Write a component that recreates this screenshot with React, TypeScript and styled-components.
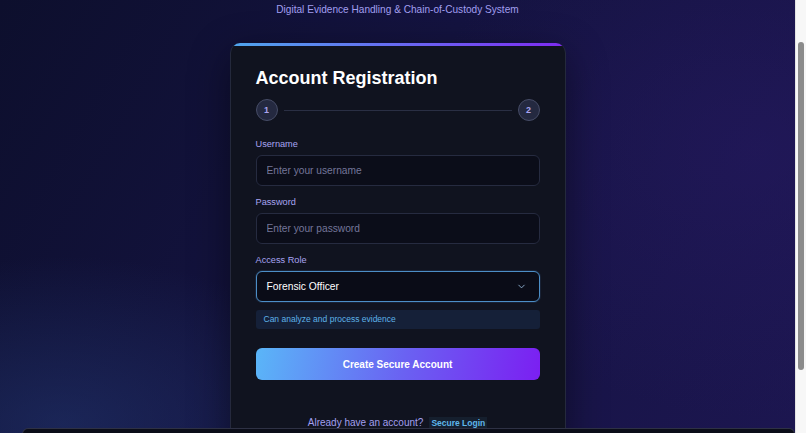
import styled, { createGlobalStyle } from "styled-components";
import { ChevronDown } from "lucide-react";

const GlobalStyle = createGlobalStyle`
    html, body {
        margin: 0;
        padding: 0;
        height: 100%;
        overflow: hidden;
    }
    body {
        background: #13123a;
        font-family: "Liberation Sans", Arial, Helvetica, sans-serif;
    }
    #root {
        height: 100%;
    }
`;

export default function App() {
    return (
        <>
            <GlobalStyle />
            <Viewport>
                <Main>
                    <Subtitle>{"Digital Evidence Handling & Chain-of-Custody System"}</Subtitle>
                    <Card>
                        <Title>{"Account Registration"}</Title>
                        <Steps>
                            <StepDot>{"1"}</StepDot>
                            <StepLine />
                            <StepDot>{"2"}</StepDot>
                        </Steps>

                        <Label $first>{"Username"}</Label>
                        <Input placeholder="Enter your username" />

                        <Label>{"Password"}</Label>
                        <Input type="password" placeholder="Enter your password" />

                        <Label>{"Access Role"}</Label>
                        <Select>
                            <span>{"Forensic Officer"}</span>
                            <ChevronDown size={11} strokeWidth={2} />
                        </Select>
                        <Hint>{"Can analyze and process evidence"}</Hint>

                        <SubmitButton>{"Create Secure Account"}</SubmitButton>

                        <Footer>
                            {"Already have an account?"}
                            <LoginLink>{"Secure Login"}</LoginLink>
                        </Footer>
                    </Card>
                </Main>
                <ScrollRail>
                    <ScrollThumb />
                </ScrollRail>
            </Viewport>
            <BottomPanel />
        </>
    );
}

const Viewport = styled.div`
    height: 100%;
    display: flex;
`;

const Main = styled.div`
    flex: 1;
    overflow: hidden;
    padding-top: 3px;
    display: flex;
    flex-direction: column;
    align-items: center;
    background:
        radial-gradient(ellipse 420px 240px at 8% 98%, rgba(34, 54, 112, 0.55), transparent 70%),
        radial-gradient(ellipse 480px 380px at 95% 35%, rgba(40, 26, 102, 0.45), transparent 70%),
        linear-gradient(120deg, #0d0f2d 0%, #141340 45%, #1c1650 100%);
`;

const ScrollRail = styled.div`
    width: 11px;
    flex-shrink: 0;
    box-sizing: border-box;
    padding: 42px 2px 0 2px;
    background: #f7f7f7;
    border-left: 1px solid #e3e3e3;
`;

const ScrollThumb = styled.div`
    height: 328px;
    border-radius: 4px;
    background: #8b8b8b;
`;

const Subtitle = styled.div`
    font-size: 10.1px;
    line-height: 14px;
    color: #a29ff0;
`;

const Card = styled.div`
    position: relative;
    flex-shrink: 0;
    margin-top: 26px;
    width: 336px;
    box-sizing: border-box;
    padding: 24px 25px 24px;
    display: flex;
    flex-direction: column;
    background: #10131f;
    border: 1px solid rgba(120, 130, 180, 0.2);
    border-top: none;
    border-radius: 10px;
    box-shadow: 0 12px 40px rgba(0, 0, 0, 0.45);
    overflow: hidden;

    &::before {
        content: "";
        position: absolute;
        top: 0;
        left: 0;
        right: 0;
        height: 3px;
        background: linear-gradient(90deg, #4fa6ee, #6a64f2 55%, #7e2bf2);
    }
`;

const Title = styled.h1`
    margin: 0;
    font-size: 18px;
    line-height: 22px;
    font-weight: bold;
    color: #ffffff;
`;

const Steps = styled.div`
    margin-top: 10px;
    display: flex;
    align-items: center;
`;

const StepDot = styled.div`
    width: 22px;
    height: 22px;
    box-sizing: border-box;
    border-radius: 50%;
    background: #242940;
    border: 1.5px solid #464c66;
    color: #aaa4f0;
    font-size: 9px;
    font-weight: bold;
    display: flex;
    align-items: center;
    justify-content: center;
`;

const StepLine = styled.div`
    flex: 1;
    height: 1px;
    margin: 0 6px;
    background: #2a2f44;
`;

const Label = styled.label<{ $first?: boolean }>`
    margin-top: ${({ $first }) => ($first ? "17px" : "10px")};
    font-size: 9.2px;
    line-height: 12px;
    color: #a8a4f2;
`;

const Input = styled.input`
    margin-top: 5px;
    height: 31px;
    box-sizing: border-box;
    padding: 0 10px;
    background: #0b0d19;
    border: 1px solid #262b40;
    border-radius: 6px;
    color: #ffffff;
    font-family: inherit;
    font-size: 10.2px;
    outline: none;

    &::placeholder {
        color: #74769a;
    }
`;

const Select = styled.div`
    margin-top: 5px;
    height: 31px;
    box-sizing: border-box;
    padding: 0 12px 0 10px;
    display: flex;
    align-items: center;
    justify-content: space-between;
    background: #0a0c17;
    border: 1.5px solid #4c8ec6;
    border-radius: 6px;
    box-shadow: 0 0 0 1px rgba(80, 150, 220, 0.12);
    color: #ffffff;
    font-size: 10.3px;

    svg {
        color: #8fb2d4;
    }
`;

const Hint = styled.div`
    margin-top: 8px;
    height: 19px;
    padding: 0 8px;
    border-radius: 3px;
    background: #152038;
    color: #5eb2e8;
    font-size: 8.5px;
    line-height: 19px;
`;

const SubmitButton = styled.button`
    margin-top: 19px;
    height: 32px;
    border: none;
    border-radius: 6px;
    background: linear-gradient(100deg, #5ab6f8 0%, #6a62f2 52%, #7b1ff2 100%);
    color: #ffffff;
    font-family: inherit;
    font-size: 10px;
    font-weight: bold;
    cursor: pointer;
`;

const Footer = styled.div`
    margin-top: 36px;
    text-align: center;
    font-size: 10px;
    line-height: 14px;
    color: #a29ff0;
`;

const LoginLink = styled.a`
    margin-left: 6px;
    padding: 1px 2px;
    font-size: 8.5px;
    font-weight: bold;
    color: #5fb6ea;
    background: rgba(95, 182, 234, 0.08);
    cursor: pointer;
`;

const BottomPanel = styled.div`
    position: fixed;
    left: 22px;
    right: 11px;
    top: 428px;
    height: 30px;
    background: #0b0d18;
    border: 1px solid rgba(150, 160, 200, 0.25);
    border-radius: 6px;
`;
